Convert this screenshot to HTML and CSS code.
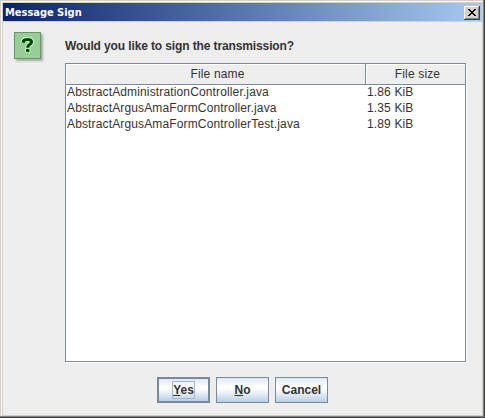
FILE: index.html
```html
<!DOCTYPE html>
<html lang="en">
<head>
<meta charset="utf-8">
<title>Message Sign</title>
<link rel="stylesheet" href="styles.css">
</head>
<body>
<div class="window">
  <div class="frame">
    <header class="titlebar">
      <span class="title">Message Sign</span>
      <button class="close" aria-label="Close">
        <svg width="8" height="7" viewBox="0 0 8 7" shape-rendering="crispEdges"><path d="M0 0h2v1h1v1h2v-1h1v-1h2v1h-1v1h-1v1h-1v1h1v1h1v1h1v1h-2v-1h-1v-1h-2v1h-1v1h-2v-1h1v-1h1v-1h1v-1h-1v-1h-1v-1h-1z"/></svg>
      </button>
    </header>
    <main class="content">
      <div class="icon">
        <svg width="13" height="17" viewBox="0 0 13 17"><path class="halo" d="M2.5 6V4.2Q3 2.5 6.4 2.5Q10.5 2.5 10.5 5Q10.5 6.7 8.2 7.9Q6.7 8.7 6.7 10.7M6.7 11.5V15.5"/><path class="mark" d="M2.5 5.8V4.2Q3 2.5 6.4 2.5Q10.5 2.5 10.5 5Q10.5 6.7 8.2 7.9Q6.7 8.7 6.7 10.7M6.7 12V15"/></svg>
      </div>
      <div class="body">
        <p class="question">Would you like to sign the transmission?</p>
        <div class="pane">
          <div class="row head"><span>File name</span><span>File size</span></div>
          <div class="row"><span>AbstractAdministrationController.java</span><span>1.86 KiB</span></div>
          <div class="row"><span>AbstractArgusAmaFormController.java</span><span>1.35 KiB</span></div>
          <div class="row"><span>AbstractArgusAmaFormControllerTest.java</span><span>1.89 KiB</span></div>
        </div>
      </div>
    </main>
    <footer class="actions">
      <button class="btn default"><span class="focus"><u>Y</u>es</span></button>
      <button class="btn"><span><u>N</u>o</span></button>
      <button class="btn">Cancel</button>
    </footer>
  </div>
</div>
</body>
</html>
```
FILE: styles.css
```css
* { box-sizing: border-box; }
body { margin: 0; font: 12px/16px "Liberation Sans", Arial, sans-serif; color: #333; overflow: hidden; }
.window {
  width: 485px; height: 418px; background: #d4d0c8; padding: 1px 2px 2px 1px;
  box-shadow: inset -1px -1px #404040, inset -2px -2px #808080;
}
.frame {
  display: flex; flex-direction: column; height: 415px; background: #eee;
  border: 1px solid #d4d0c8; border-top-color: #fff; border-left-color: #fff;
  box-shadow: inset 1px 1px #d4d0c8; padding: 1px 0 0 1px;
}
.titlebar {
  display: flex; align-items: center; justify-content: space-between;
  height: 19px; padding: 1px 2px 0; border-bottom: 1px solid #d4d0c8;
  background: linear-gradient(90deg, #0a246a, #a6caf0);
}
.title { font: bold 11px/17px "DejaVu Sans Condensed", "DejaVu Sans", sans-serif; color: #fff; letter-spacing: -0.02px; }
.close {
  display: flex; align-items: center; justify-content: center; width: 16px; height: 14px;
  padding: 0 1px 1px 0; border: 0; background: #d4d0c8;
  box-shadow: inset -1px -1px #404040, inset 1px 1px #fff, inset -2px -2px #808080;
}
.content { display: flex; padding: 10px 15px 0 11px; }
.icon {
  display: flex; align-items: center; justify-content: center; width: 27px; height: 27px;
  border: 1px solid #669966; background: #99cc99; box-shadow: 2px 2px 2px #aaa;
}
.icon svg { overflow: visible; }
.icon path { fill: none; }
.icon .halo { stroke: #ccffcc; stroke-width: 5; }
.icon .mark { stroke: #004400; stroke-width: 3.2; }
.body { margin-left: 24px; }
.question { margin: 6px 0 9px; font-weight: bold; line-height: 16px; letter-spacing: -0.12px; }
.pane {
  width: 401px; height: 299px; background: #fff; border: 1px solid #7a8a99;
  box-shadow: 1px 1px #fff;
}
.row { display: grid; grid-template-columns: 300px 99px; height: 16px; line-height: 16px; white-space: nowrap; letter-spacing: 0.14px; }
.row span { padding-left: 1px; }
.row.head { height: 20px; line-height: 20px; text-align: center; letter-spacing: 0.15px; }
.head span { background: #eee; border-right: 1px solid #7a8a99; border-bottom: 1px solid #7a8a99; box-shadow: inset 1px 1px #fff; padding: 0 0 0 4px; }
.head span:last-child { border-right: 0; }
.actions { display: flex; gap: 6px; margin: 15px 0 0 154px; }
.btn {
  width: 53px; height: 26px; padding: 0; border: 1px solid #7a8a99;
  background: linear-gradient(#dde8f3, #fff 35%, #fff 45%, #b8cfe5);
  font: bold 12px/16px "Liberation Sans", Arial, sans-serif; color: #333;
}
.btn.default { border-width: 2px; }
.focus { display: inline-block; border: 1px solid #a3b8cc; line-height: 16px; }
```
